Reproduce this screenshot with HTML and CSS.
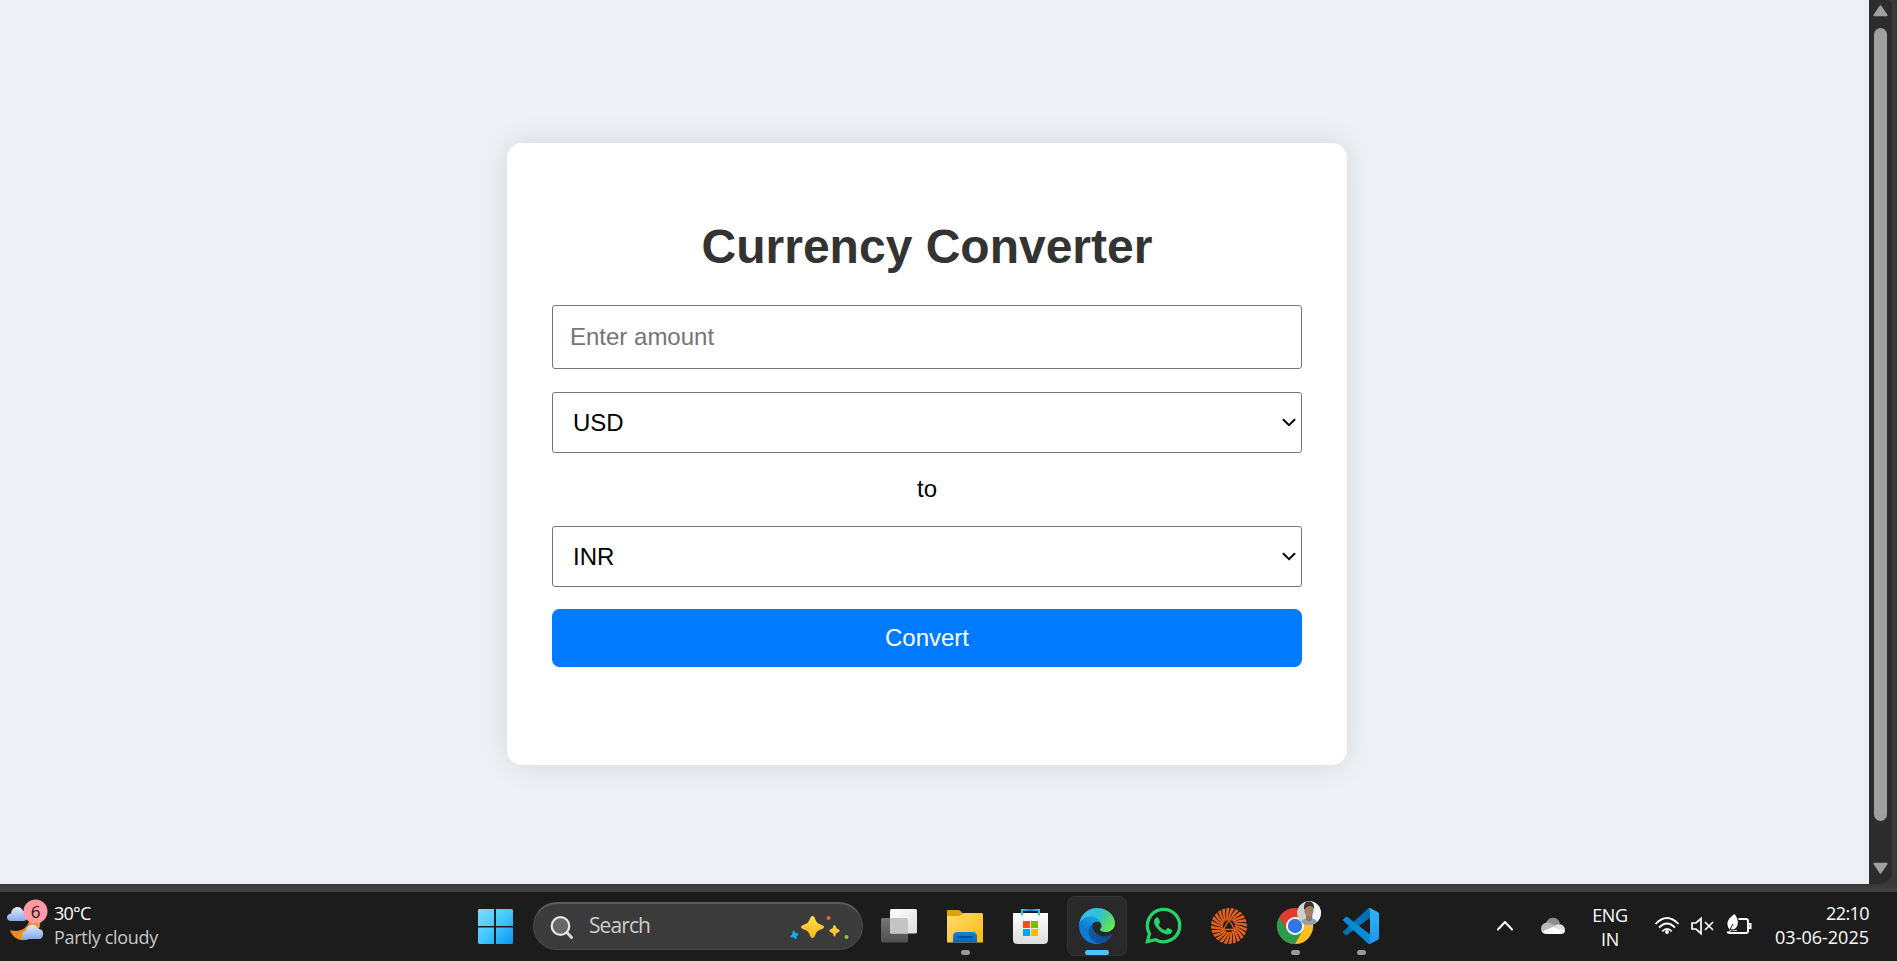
FILE: index.html
```html
<!DOCTYPE html>
<html lang="en">
<head>
<meta charset="utf-8">
<title>Currency Converter</title>
<link rel="stylesheet" href="styles.css">
</head>
<body>
<div class="window">
  <main class="page">
    <form class="card">
      <h1 class="title">Currency Converter</h1>
      <input class="field amount" type="text" placeholder="Enter amount">
      <div class="select-wrap">
        <select class="field select"><option>USD</option><option>INR</option></select>
        <svg class="caret" width="14" height="10" viewBox="0 0 14 10"><path d="M1.5 1.8 7 7.2 12.5 1.8"/></svg>
      </div>
      <p class="to">to</p>
      <div class="select-wrap">
        <select class="field select"><option>INR</option><option>USD</option></select>
        <svg class="caret" width="14" height="10" viewBox="0 0 14 10"><path d="M1.5 1.8 7 7.2 12.5 1.8"/></svg>
      </div>
      <button class="convert" type="button">Convert</button>
    </form>
  </main>
  <div class="scrollbar">
    <svg class="arrow" width="15" height="12" viewBox="0 0 15 12"><path d="M7.5 1.2 13.6 10.2H1.4Z"/></svg>
    <div class="thumb"></div>
    <svg class="arrow" width="15" height="12" viewBox="0 0 15 12"><path d="M7.5 10.8 13.6 1.8H1.4Z"/></svg>
  </div>
</div>

<footer class="taskbar">
  <div class="weather">
    <svg class="weather-icon" width="44" height="69" viewBox="4 892 44 69">
      <defs>
        <linearGradient id="cloud" x1="0" y1="0" x2="0" y2="1"><stop offset="0" stop-color="#e0eafd"/><stop offset="1" stop-color="#84aaf0"/></linearGradient>
        <linearGradient id="moon" x1="0" y1="0" x2="1" y2="1"><stop offset="0" stop-color="#f07a1c"/><stop offset=".5" stop-color="#f28a1e"/><stop offset="1" stop-color="#f6b02c"/></linearGradient>
      </defs>
      <path fill="url(#moon)" d="M39 916c4 10-2 23-14 24-7 .6-13-3-15-10 8 3 21-1 19-14Z"/>
      <path fill="url(#cloud)" d="M11 921c-5 0-5.500-7 0-7.500C12 906 21 905 23 911c6-1 7 9 1 10Z"/>
      <path fill="url(#cloud)" d="M26 939c-5.500 0-5.500-7.500 0-8 1-7.500 10-8.500 12-2 7-1 6.500 10 1 10Z"/>
      <circle cx="35.500" cy="911.500" r="12" fill="#fd9aa4"/>
      <text class="badge" x="35.500" y="917.500" text-anchor="middle">6</text>
    </svg>
    <div class="weather-text"><span class="temp">30°C</span><span class="sky">Partly cloudy</span></div>
  </div>

  <div class="apps">
    <svg class="app" viewBox="462 892 66 69">
      <defs><linearGradient id="win" gradientUnits="userSpaceOnUse" x1="478" y1="909" x2="513" y2="944"><stop offset="0" stop-color="#7fdcfb"/><stop offset=".5" stop-color="#43c8fd"/><stop offset="1" stop-color="#0a94f8"/></linearGradient></defs>
      <path fill="url(#win)" d="M479 909h15v17h-16v-16ZM496 909h16l1 1v16h-17ZM478 927.500h16V944h-15l-1-1ZM496 927.500h17V943l-1 1h-16Z"/>
    </svg>
    <div class="search">
      <svg width="24" height="26" viewBox="550 913 24 26"><path d="m566.500 931 5 5.500" stroke="#d5dce6" stroke-width="3" stroke-linecap="round"/><circle cx="560.500" cy="925" r="8.800" fill="#686868" stroke="#e4e7ec" stroke-width="2.200"/></svg>
      <span class="search-label">Search</span>
      <svg class="sparkles" width="62" height="26" viewBox="788 913 62 26">
        <defs><linearGradient id="gold" x1="0" y1="0" x2="0" y2="1"><stop offset="0" stop-color="#ffe04a"/><stop offset="1" stop-color="#fbb320"/></linearGradient></defs>
        <path fill="url(#gold)" d="M812.500 915q2 0 3 4 1 3 4.500 4.200 4 1.300 4 2.800t-4 2.800q-3.500 1.200-4.500 4.200-1 4-3 4t-3-4q-1-3-4.500-4.200-4-1.300-4-2.800t4-2.800q3.500-1.200 4.500-4.200 1-4 3-4Z"/>
        <path fill="url(#gold)" d="M834.500 924q1 0 1.800 3.200 3.500 1.300 3.500 2.500t-3.500 2.500q-.8 3.200-1.800 3.200t-1.800-3.200q-3.500-1.300-3.500-2.500t3.500-2.500q.8-3.200 1.800-3.200Z"/>
        <path fill="#12aef0" d="M793 929.500q2 0 2.200 2.300l3.300.7q.3 1.600-2 2.500l.3 3q-2 .5-3-1.800l-3.300.3q-.8-1.700 1.500-2.700Z"/>
        <circle cx="828.500" cy="917" r="2" fill="#e8622c"/><circle cx="846.500" cy="936" r="2" fill="#8cc540"/>
      </svg>
    </div>
    <svg class="app" viewBox="866 892 66 69">
      <defs><linearGradient id="tv" x1="0" y1="0" x2="1" y2="1"><stop offset="0" stop-color="#fff"/><stop offset="1" stop-color="#dedede"/></linearGradient>
      <linearGradient id="tvb" x1="0" y1="0" x2="0" y2="1"><stop offset="0" stop-color="#757575"/><stop offset="1" stop-color="#505050"/></linearGradient></defs>
      <rect x="881" y="918" width="27" height="24.500" rx="1.500" fill="url(#tvb)"/>
      <rect x="890" y="909" width="27" height="24.500" rx="1.500" fill="url(#tv)"/>
      <path d="M890 918h16.500l1.500 1.500v14h-16.500l-1.500-1.500Z" fill="#c4c4c4"/>
    </svg>
    <svg class="app" viewBox="932 892 66 69">
      <defs><linearGradient id="fold" x1="0" y1="0" x2="1" y2="1"><stop offset="0" stop-color="#ffdc73"/><stop offset="1" stop-color="#fbb90e"/></linearGradient>
      <linearGradient id="pocket" x1="0" y1="0" x2="0" y2="1"><stop offset="0" stop-color="#1483d8"/><stop offset="1" stop-color="#0a66b8"/></linearGradient></defs>
      <path fill="#dfa10c" d="M947 911q0-1 1-1h10q1.500 0 2.500 1l3 3-4 5h-12.500Z"/>
      <path fill="url(#fold)" d="M947 916h11q2 0 3-1l1.500-1.500q1-.5 2-.5h17q1.500 0 1.500 1.500V942.500h-36Z"/>
      <path fill="url(#pocket)" d="M953 942.500v-6q0-4.500 4.500-4.500h15q4.500 0 4.500 4.500v6Z"/>
      <path stroke="#0a4c8c" stroke-width="2" d="M957 937h15.500"/>
      <rect x="961" y="950" width="9" height="5" rx="2.500" fill="#9a9a9a"/>
    </svg>
    <svg class="app" viewBox="998 892 66 69">
      <defs><linearGradient id="bag" x1="0" y1="0" x2="0" y2="1"><stop offset="0" stop-color="#fff"/><stop offset="1" stop-color="#dcdcdc"/></linearGradient>
      <linearGradient id="hand" gradientUnits="userSpaceOnUse" x1="1021" y1="0" x2="1040" y2="0"><stop offset="0" stop-color="#3ccbf4"/><stop offset=".5" stop-color="#0a78d4"/><stop offset="1" stop-color="#3ccbf4"/></linearGradient></defs>
      <path fill="url(#bag)" d="M1013 913h35v26.500q0 4.500-4.500 4.500h-26q-4.500 0-4.500-4.500Z"/>
      <path fill="none" stroke="url(#hand)" stroke-width="2" d="M1022 915.500v-5.500h17v5.500"/>
      <path fill="#f25022" d="M1023 921h7v7h-7z"/><path fill="#7fba00" d="M1031 921h7v7h-7z"/><path fill="#00a4ef" d="M1023 929h7v7h-7z"/><path fill="#ffb900" d="M1031 929h7v7h-7z"/>
    </svg>
    <svg class="app" viewBox="1064 892 66 69">
      <defs>
        <linearGradient id="e1" x1=".2" y1=".7" x2="1" y2=".7"><stop offset="0" stop-color="#0c59a4"/><stop offset="1" stop-color="#114a8b"/></linearGradient>
        <linearGradient id="e2" x1=".7" y1=".2" x2=".3" y2="1"><stop offset="0" stop-color="#1b9de2"/><stop offset=".5" stop-color="#0f78d4"/><stop offset="1" stop-color="#0a83d8"/></linearGradient>
        <linearGradient id="e3" x1="0" y1=".3" x2="1" y2=".7"><stop offset="0" stop-color="#35c1f1"/><stop offset=".45" stop-color="#2cc3d8"/><stop offset=".75" stop-color="#52d37c"/><stop offset="1" stop-color="#66eb50"/></linearGradient>
      </defs>
      <rect x="1067.500" y="896.500" width="59" height="59" rx="7" fill="#292929" stroke="#343434"/>
      <svg x="1079" y="908" width="36" height="36" viewBox="4.600 5 256 256">
        <path fill="url(#e1)" d="M235.680 195.460a93.730 93.730 0 0 1-10.540 4.710 101.870 101.870 0 0 1-35.900 6.460c-47.320 0-88.540-32.550-88.540-74.320A31.480 31.480 0 0 1 117.130 105c-42.800 1.800-53.800 46.400-53.800 72.530 0 73.880 68.090 81.370 82.760 81.370 7.910 0 19.840-2.300 27-4.560l1.310-.44a128.340 128.340 0 0 0 66.600-52.800 4 4 0 0 0-5.320-5.640z"/>
        <path fill="url(#e2)" d="M110.340 246.340A79.200 79.200 0 0 1 87.600 225a80.720 80.720 0 0 1 29.530-120c3.120-1.470 8.450-4.130 15.540-4a32.350 32.350 0 0 1 25.690 13 31.880 31.880 0 0 1 6.360 18.660c0-.21 24.460-79.600-80-79.600-43.900 0-80 41.660-80 78.210a130.150 130.150 0 0 0 12.110 56 128 128 0 0 0 156.380 67.110 75.550 75.550 0 0 1-62.780-8z"/>
        <path fill="url(#e3)" d="M156.940 153.780c-.81 1.050-3.300 2.500-3.300 5.660 0 2.610 1.700 5.120 4.720 7.230 14.380 10 41.490 8.680 41.560 8.680a59.560 59.560 0 0 0 30.270-8.350A61.380 61.380 0 0 0 260.440 114c.26-22.410-8-37.310-11.340-43.910C228 28.760 182.350 5 132.720 5A128 128 0 0 0 4.710 131.200c.48-36.540 36.800-66.050 80-66.050 3.500 0 23.460.34 42 10.070 16.340 8.580 24.900 18.940 30.850 29.210 6.180 10.670 7.280 24.150 7.280 29.520s-2.740 13.330-7.900 19.830z"/>
      </svg>
      <rect x="1085" y="950" width="24" height="5" rx="2.500" fill="#4cc2ff"/>
    </svg>
    <svg class="app" viewBox="1130 892 66 69">
      <path fill="none" stroke="#25d366" stroke-width="3.300" d="M1147.400 941.600l2.100-8a16.200 16.200 0 1 1 6.200 6.100Z"/>
      <svg x="1145" y="908" width="36" height="36" viewBox="0 0 24 24"><path fill="#25d366" d="M17.472 14.382c-.297-.149-1.758-.867-2.030-.967-.273-.099-.471-.148-.67.150-.197.297-.767.966-.940 1.164-.173.199-.347.223-.644.075-.297-.150-1.255-.463-2.390-1.475-.883-.788-1.480-1.761-1.653-2.059-.173-.297-.018-.458.130-.606.134-.133.298-.347.446-.520.149-.174.198-.298.298-.497.099-.198.050-.371-.025-.520-.075-.149-.669-1.612-.916-2.207-.242-.579-.487-.5-.669-.510-.173-.008-.371-.010-.570-.010-.198 0-.520.074-.792.372-.272.297-1.040 1.016-1.040 2.479 0 1.462 1.065 2.875 1.213 3.074.149.198 2.096 3.200 5.077 4.487.709.306 1.262.489 1.694.625.712.227 1.360.195 1.871.118.571-.085 1.758-.719 2.006-1.413.248-.694.248-1.289.173-1.413-.074-.124-.272-.198-.570-.347"/></svg>
    </svg>
    <svg class="app" viewBox="-33 -34 66 69">
      <defs>
        <path id="ray" fill="#e8611a" d="M-1.300-6Q-.6-12 2.200-17.900L5.400-17.200Q1.400-11.500.2-6Z"/>
        <g id="rays"><use href="#ray"/><use href="#ray" transform="rotate(15)"/><use href="#ray" transform="rotate(30)"/><use href="#ray" transform="rotate(45)"/><use href="#ray" transform="rotate(60)"/><use href="#ray" transform="rotate(75)"/></g>
      </defs>
      <use href="#rays"/><use href="#rays" transform="rotate(90)"/><use href="#rays" transform="rotate(180)"/><use href="#rays" transform="rotate(270)"/>
      <path fill="none" stroke="#e8611a" stroke-width="1.400" d="M0-6 5.700 3.500H-5.700Z"/>
    </svg>
    <svg class="app" viewBox="-33 -34 66 69">
      <defs><clipPath id="face"><circle cx="14" cy="-13" r="12"/></clipPath></defs>
      <circle r="18" fill="#e33b2e"/>
      <path fill="#2a9c4a" d="M-15.600-9A18 18 0 0 0 0 18L7.800 4.500 0 0-7.800 4.500Z"/>
      <path fill="#fcc21b" d="M0 18A18 18 0 0 0 15.600-9H0V0l7.800 4.500Z"/>
      <circle r="9" fill="#fff"/><circle r="7.200" fill="#2f77e8"/>
      <g clip-path="url(#face)"><circle cx="14" cy="-13" r="12" fill="#cfcfcf"/><path fill="#f4f4f4" d="M16-25h11V0H19Z"/><path fill="#8fa0af" d="M5 0q0-7 7-7.500h4q7 .5 7 7.500Z"/><path fill="#9a705e" d="M11-11h6v5q-3 2-6 0Z"/><ellipse cx="14" cy="-15.500" rx="4.500" ry="6" fill="#a77c69"/><path fill="#3a3331" d="M9-16q-1-9 5.500-8.500Q20-24 19-16q-1-4-4-4t-6 4Z"/></g>
      <rect x="-4" y="24" width="9" height="5" rx="2.500" fill="#9a9a9a"/>
    </svg>
    <svg class="app" viewBox="1328 892 66 69">
      <defs><linearGradient id="vs" x1="0" y1="0" x2="0" y2="1"><stop offset="0" stop-color="#2fb4f6"/><stop offset="1" stop-color="#1f97ee"/></linearGradient></defs>
      <svg x="1343" y="908" width="36" height="36" viewBox="0 0 24 24">
        <path fill="#0070b5" d="M.327 16.739a1 1 0 0 1 0-1.479L16.505.5A1.494 1.494 0 0 1 18.210.210v6.190L2.926 17.997a1 1 0 0 1-1.276-.057Z"/>
        <path fill="#078bd6" d="M.327 7.261a1 1 0 0 0 0 1.479l16.178 14.760a1.494 1.494 0 0 0 1.705.29v-6.190L2.926 6.003a1 1 0 0 0-1.276.057Z"/>
        <path fill="url(#vs)" d="M18.210.210 23.150 2.587A1.500 1.500 0 0 1 24 3.939V20.060a1.500 1.500 0 0 1-.850 1.352L18.210 23.790q-.8.400-1.500-.1 1.290.2 1.290-1.100V1.400Q18 .2 16.800.3 17.500-.1 18.210.210Z"/>
      </svg>
      <rect x="1357" y="950" width="9" height="5" rx="2.500" fill="#9a9a9a"/>
    </svg>
  </div>

  <div class="tray">
    <svg class="chevron" viewBox="1483 892 44 69"><path fill="none" stroke="#fff" stroke-width="2" stroke-linecap="round" stroke-linejoin="round" d="m1498 929.500 7-7.500 7 7.500"/></svg>
    <svg class="onedrive" viewBox="1527 892 52 69">
      <path fill="#8d8d8d" d="M1546 923c2-7 12-7 14 0l-3 5-8-1Z"/>
      <path fill="#b9b9b9" d="M1541 929c0-7 8-8 11-5l5 3-12 6c-3 0-4-2-4-4Z"/>
      <path fill="#dedede" d="M1553 927.500c3-5 12-4 12 2.500l-2 2.500-12-2Z"/>
      <path fill="#fff" d="M1542 931.500l11-4.500q5 3 12 3.500c0 2.500-2 3.500-4 3.500h-15c-2 0-3-1-4-2.500Z"/>
    </svg>
    <div class="lang"><span>ENG</span><span>IN</span></div>
    <svg class="status" viewBox="1649 892 108 69" fill="none" stroke="#fff" stroke-width="2">
      <path d="M1655.500 924q11.500-12 23 0M1659 927.700q8-8.400 16 0M1662.300 931.300q4.700-5 9.400 0" stroke-width="1.800"/><circle cx="1667" cy="932" r="1.900" fill="#fff" stroke="none"/>
      <path d="M1692 923h4l5-4.500v15l-5-4.500h-4ZM1705 922l8 8M1713 922l-8 8" stroke-width="1.700"/>
      <path d="M1738.500 919h7.500q2 0 2 2v10q0 2-2 2h-16.500q-1.800 0-2-1.500" stroke-width="1.900"/><path d="M1749 924h1.500v4h-1.500"/>
      <path d="M1734.500 914c5 6 4.500 14-2 16l-4 2.500 1-3c-5-7 0-12 5-15.500ZM1733 930h4v1h-5Z" fill="#fff" stroke="none"/><path d="m1729 931 4-7M1730 929.700q4.500.5 7.500-.5" stroke="#1c1c1c" stroke-width="1"/>
    </svg>
    <div class="clock"><span>22:10</span><span class="date">03-06-2025</span></div>
  </div>
</footer>
</body>
</html>
```
FILE: styles.css
```css
* { box-sizing: border-box; }
body {
  margin: 0;
  height: 961px;
  overflow: hidden;
  background: #3b3b3b;
  font-family: "Liberation Sans", Arial, sans-serif;
}
.window {
  display: flex;
  height: 892px;
  padding: 0 5px 8px 0;
  background: linear-gradient(#393939 884px, #383838 884px, #424242);
}
.page {
  width: 1869px;
  flex: none;
  display: flex;
  justify-content: center;
  align-items: flex-start;
  padding: 143px 15px 0 0;
  background: #edf1f6;
}
.card {
  width: 840px;
  height: 622px;
  padding: 75px 45px 0;
  border-radius: 15px;
  background: #fff;
  box-shadow: 0 0 30px rgba(0, 0, 0, 0.1);
}
.title {
  margin: 0 0 30px;
  color: #333;
  font-size: 48px;
  line-height: 57px;
  text-align: center;
}
.field {
  display: block;
  width: 100%;
  border: 1px solid #767676;
  border-radius: 3px;
  background: #fff;
  color: #000;
  font: 24px "Liberation Sans", Arial, sans-serif;
  outline: 0;
}
.amount { height: 64px; padding: 0 17px; margin-bottom: 23px; }
.amount::placeholder { color: #757575; opacity: 1; }
.select-wrap { position: relative; }
.select { height: 61px; padding: 0 20px; appearance: none; }
.caret {
  position: absolute;
  right: 6px;
  top: 26px;
  fill: none;
  stroke: #000;
  stroke-width: 2;
  stroke-linecap: round;
}
.to { margin: 0; padding: 22px 0 24px; font-size: 24px; line-height: 27px; text-align: center; }
.convert {
  display: block;
  width: 100%;
  height: 58px;
  margin-top: 22px;
  padding: 0;
  border: 0;
  border-radius: 7.5px;
  background: #007bff;
  color: #fff;
  font: 24px "Liberation Sans", Arial, sans-serif;
}
.scrollbar {
  width: 23px;
  display: flex;
  flex-direction: column;
  align-items: center;
  padding: 5px 0 10px;
  border-radius: 0 6px 12px 0;
  background: #2c2c2c;
}
.arrow { flex: none; fill: #a0a0a0; stroke: #a0a0a0; stroke-width: 2; stroke-linejoin: round; }
.thumb { width: 13px; height: 793px; margin: 11px 0 auto; border-radius: 6.5px; background: #a0a0a0; }

.taskbar {
  display: flex;
  height: 69px;
  background: #1c1c1c;
  color: #fff;
  font-family: "Open Sans", "Noto Sans", sans-serif;
  font-size: 18px;
  line-height: 24px;
  white-space: nowrap;
}
.weather { width: 462px; display: flex; padding-left: 4px; }
.weather-icon { flex: none; }
.badge { font-size: 17px; fill: #2b1416; }
.weather-text { display: flex; flex-direction: column; padding: 9px 0 0 6px; }
.temp { letter-spacing: -0.8px; }
.sky { color: #c8c8c8; letter-spacing: -0.3px; }
.apps { width: 932px; display: flex; align-items: flex-start; }
.app { width: 66px; height: 69px; flex: none; }
.search {
  width: 330px;
  height: 48px;
  flex: none;
  display: flex;
  align-items: center;
  margin: 10px 3px 0 5px;
  padding: 0 12px 0 16px;
  border: 1px solid #4a4a4a;
  border-top: 2px solid #5c5c5c;
  border-radius: 24px;
  background: #3b3b3b;
}
.search-label { margin: -3px 0 0 15px; color: #cfcfcf; font-size: 21px; letter-spacing: -0.9px; }
.sparkles { margin-left: auto; }
.tray { flex: 1; display: flex; padding: 0 28px 0 89px; }
.chevron { width: 44px; height: 69px; flex: none; }
.onedrive { width: 52px; height: 69px; flex: none; }
.lang { width: 62px; display: flex; flex-direction: column; padding-top: 11px; text-align: center; letter-spacing: -0.3px; }
.status { width: 108px; height: 69px; margin-left: 8px; flex: none; }
.clock { flex: 1; display: flex; flex-direction: column; padding-top: 9px; align-items: flex-end; letter-spacing: -0.6px; }
.date { letter-spacing: 0; }
```
